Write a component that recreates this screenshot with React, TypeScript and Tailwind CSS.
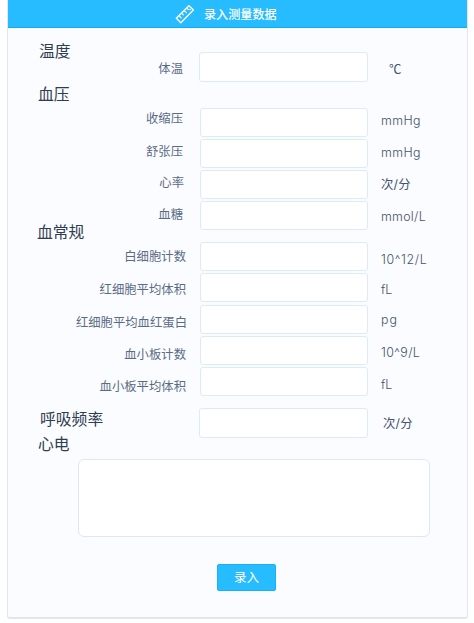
import React from 'react';

interface Field {
  label: string;
  unit: string;
  row?: string;
  labelClass: string;
  unitClass: string;
  inputClass?: string;
}

const pressureFields: Field[] = [
  { label: '收缩压', unit: 'mmHg', labelClass: 'pt-[1px] pr-[17px]', unitClass: 'pt-[3px] tracking-[0.4px] font-light' },
  { label: '舒张压', unit: 'mmHg', labelClass: 'pt-[3px] pr-[17px]', unitClass: 'pt-[4px] tracking-[0.4px] font-light' },
  { label: '心率', unit: '次/分', labelClass: 'pt-[3px] pr-[16px]', unitClass: 'pt-[5px] tracking-[0.2px]' },
  { label: '血糖', unit: 'mmol/L', row: 'h-[29px]', labelClass: 'pt-[4px] pr-[17px]', unitClass: 'pt-[6px] tracking-[0.3px] font-light' }
];

const bloodFields: Field[] = [
  { label: '白细胞计数', unit: '10^12/L', labelClass: 'pt-[5px] pr-[14px]', unitClass: 'pt-[8px] tracking-[0.65px] font-light' },
  { label: '红细胞平均体积', unit: 'fL', row: 'h-8', labelClass: 'pt-[7px] pr-[14px]', unitClass: 'pt-[7px] font-light' },
  { label: '红细胞平均血红蛋白', unit: 'pg', labelClass: 'pt-[8px] pr-[13px]', unitClass: 'pt-[5px] tracking-[1px] font-light' },
  { label: '血小板计数', unit: '10^9/L', labelClass: 'pt-[9px] pr-[14px]', unitClass: 'pt-[7px] tracking-[0.4px] font-light' },
  { label: '血小板平均体积', unit: 'fL', row: 'h-[29px]', labelClass: 'pt-[10px] pr-[14px]', unitClass: 'pt-[8px] font-light' }
];

const RulerIcon: React.FC = () => (
  <svg className="w-5 h-5" viewBox="0 0 20 20" fill="none" stroke="white" strokeWidth="1.4" strokeLinejoin="round" strokeLinecap="round">
    <path d="M1.3 14.3 14 1.8 18.4 6 5.8 18.7Z" />
    <path d="M4.3 12l1.9 1.9M6.9 9.4l1.4 1.4M9.5 6.8l1.9 1.9M12.1 4.3l1.4 1.4" strokeWidth="1.1" />
    <circle cx="15.1" cy="5.4" r="0.5" strokeWidth="0.8" />
  </svg>
);

const FieldRow: React.FC<{ field: Field }> = ({ field }) => (
  <div className={`flex items-start ${field.row || 'h-[31px]'}`}>
    <label className={`w-[192px] shrink-0 text-right leading-5 whitespace-nowrap ${field.labelClass}`}>{field.label}</label>
    <input className={`block shrink-0 bg-white border border-[#dcecf7] rounded-[3px] outline-none ${field.inputClass || 'w-[168px] h-[29px]'}`} />
    <span className={`pl-[13px] leading-5 text-[12.4px] text-[#46536a] whitespace-nowrap ${field.unitClass}`}>{field.unit}</span>
  </div>
);

const Heading: React.FC<{ className: string; children: React.ReactNode }> = ({ className, children }) => (
  <h2 className={`h-6 pt-px text-[15.8px] leading-6 text-[#303c50] whitespace-nowrap ${className}`}>{children}</h2>
);

const App: React.FC = () => {
  return (
    <div className="h-[623px] bg-white pl-[7px] font-['Inter','Noto_Sans_CJK_SC',sans-serif]">
      <div className="w-[461px] h-[619px] flex flex-col bg-[#fafcff] border border-t-0 border-b-2 border-[#e0e7ef] rounded-b-[3px] text-[12.35px] text-[#5b6b84]">
        <header className="h-7 shrink-0 flex items-center bg-[#27bbff] border-b border-[#12aaf0] pl-[167px] gap-[9px] text-white">
          <RulerIcon />
          <h1 className="pt-[2px] text-[12.1px] leading-5 font-medium">录入测量数据</h1>
        </header>

        <section className="h-[54px] flex flex-col pt-[11px]">
          <Heading className="pl-[31px] -mb-[11px]">温度</Heading>
          <FieldRow
            field={{
              label: '体温',
              unit: '℃',
              labelClass: 'pt-[7px] pr-[16px] -ml-px',
              unitClass: "pt-[7px] pl-[21px] font-['Noto_Sans_CJK_SC']",
              inputClass: 'w-[169px] h-[30px]'
            }}
          />
        </section>

        <section>
          <Heading className="pl-[30px] mb-[2px]">血压</Heading>
          {pressureFields.map((field) => <FieldRow key={field.label} field={field} />)}
        </section>

        <section className="-mt-[10px]">
          <Heading className="pl-[29px] -mb-[2px]">血常规</Heading>
          {bloodFields.map((field) => <FieldRow key={field.label} field={field} />)}
        </section>

        <section className="flex items-start pt-3 h-[41px]">
          <Heading className="w-[191px] pl-[32px] -mt-px">呼吸频率</Heading>
          <input className="block shrink-0 w-[169px] h-[30px] bg-white border border-[#dcecf7] rounded-[3px] outline-none" />
          <span className="pl-[15px] pt-[6px] leading-5 text-[12.4px] tracking-[0.2px] text-[#46536a]">次/分</span>
        </section>

        <section className="-mt-[5px]">
          <Heading className="pl-[30px] mb-[3px]">心电</Heading>
          <textarea className="block ml-[70px] w-[352px] h-[78px] bg-white border border-[#dce8f2] rounded-md resize-none outline-none" />
        </section>

        <button className="mt-[27px] ml-[209px] w-[59px] h-[27px] shrink-0 flex items-center justify-center pt-px bg-[#27bbff] border border-[#1baff5] rounded-[2px] text-[12.5px] text-white">
          录入
        </button>
      </div>
    </div>
  );
};

export default App;
